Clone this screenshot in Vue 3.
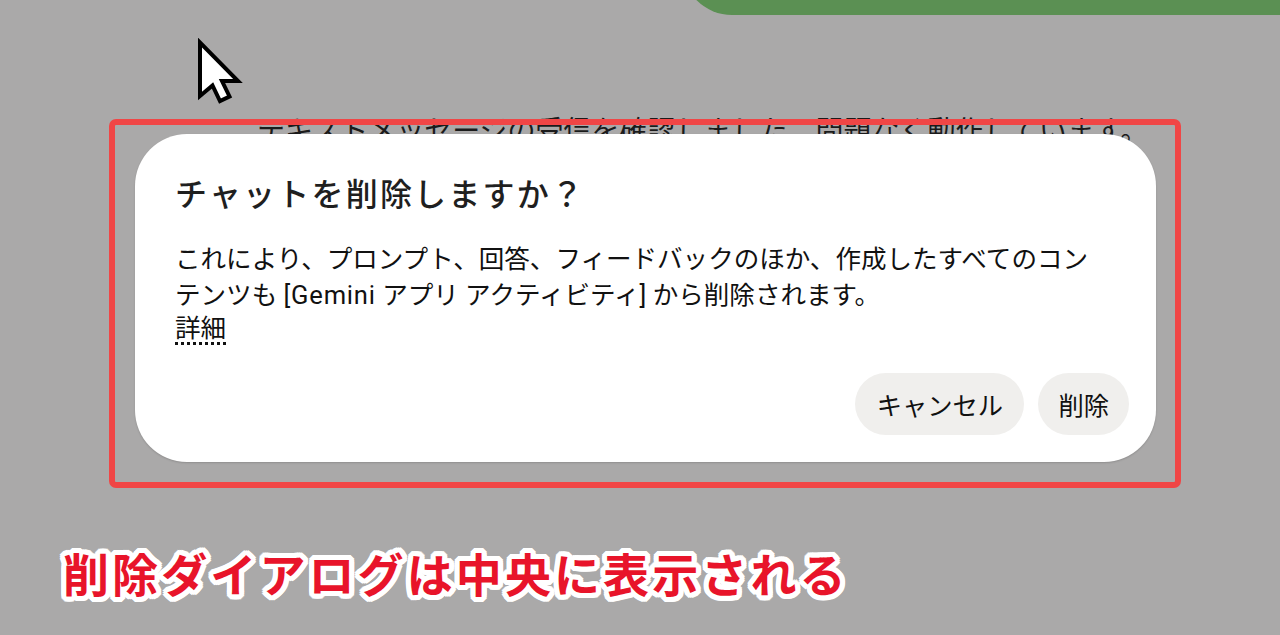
<template>
  <div class="page">
    <div class="top-bar"></div>
    <svg class="cursor" width="50" height="68" viewBox="0 0 50 68">
      <path d="M3 4.500 L3 58 L15.500 47.500 L23 63 L32.500 58.500 L25 43 L41 43 Z" fill="#fff" stroke="#000" stroke-width="4" stroke-linejoin="miter" />
    </svg>
    <p class="behind">テキストメッセージの受信を確認しました。問題なく動作しています。</p>
    <section class="highlight">
      <div class="dialog">
        <h2 class="title">チャットを削除しますか？</h2>
        <div class="body">
          <p>これにより、プロンプト、回答、フィードバックのほか、作成したすべてのコンテンツも <span class="latin">[Gemini</span> アプリ アクティビティ] から削除されます。</p>
          <span class="link">詳細</span>
        </div>
        <div class="actions">
          <button class="btn cancel">キャンセル</button>
          <button class="btn confirm">削除</button>
        </div>
      </div>
    </section>
    <div class="caption">削除ダイアログは中央に表示される</div>
  </div>
</template>

<script setup>
</script>

<style>
html, body { margin: 0; background: #aaa9a9; }
</style>

<style scoped>
.page {
  position: relative;
  width: 1280px;
  height: 635px;
  overflow: hidden;
  background: #aaa9a9;
  font-family: Roboto, "Noto Sans CJK JP", sans-serif;
  display: flex;
  flex-direction: column;
}
.top-bar {
  align-self: flex-end;
  width: 598px;
  height: 50px;
  margin-top: -35px;
  background: #5b9053;
  border-bottom-left-radius: 50px;
  flex: none;
}
.cursor {
  position: absolute;
  left: 197px;
  top: 38px;
}
.behind {
  position: absolute;
  left: 257px;
  top: 112px;
  margin: 0;
  font-size: 28px;
  line-height: 40px;
  white-space: nowrap;
  color: #1b1b1b;
}
.highlight {
  position: relative;
  box-sizing: border-box;
  flex: none;
  width: 1072px;
  height: 369px;
  margin: 104px 0 0 109px;
  padding: 9px 19px 20px 20px;
  border: 6px solid #f04646;
  border-radius: 7px;
}
.dialog {
  box-sizing: border-box;
  height: 328px;
  padding: 38px 27px 27px 40px;
  background: #fff;
  border-radius: 52px;
  box-shadow: 0 1px 2px rgba(0, 0, 0, 0.16);
  display: flex;
  flex-direction: column;
}
.title {
  margin: 0;
  font-size: 32px;
  line-height: 46px;
  font-weight: 500;
  letter-spacing: 2.200px;
  color: #1f1f1f;
}
.body {
  margin-top: 24px;
  width: 930px;
  font-size: 25.550px;
  line-height: 35.500px;
  color: #111;
}
.body p {
  margin: 0;
}
.latin {
  letter-spacing: 0.800px;
}
.link {
  display: block;
  width: fit-content;
  height: 33px;
  margin-top: -1px;
  border-bottom: 3px dotted #111;
  box-sizing: border-box;
  line-height: 32px;
}
.actions {
  margin-top: auto;
  display: flex;
  justify-content: flex-end;
  gap: 14px;
}
.btn {
  height: 62px;
  border: 0;
  border-radius: 31px;
  background: #f0efed;
  color: #111;
  font: inherit;
  font-size: 25.300px;
}
.cancel {
  padding: 0 21.250px;
}
.confirm {
  padding: 0 20px;
}
.caption {
  margin: 58px 0 0 63px;
  font-size: 46px;
  line-height: 60px;
  font-weight: 700;
  color: #e8142a;
  letter-spacing: 3.100px;
  white-space: nowrap;
  text-shadow:
    5px 0 0 #fff, -5px 0 0 #fff, 0 5px 0 #fff, 0 -5px 0 #fff,
    4px 3px 0 #fff, -4px 3px 0 #fff, 4px -3px 0 #fff, -4px -3px 0 #fff,
    3px 4px 0 #fff, -3px 4px 0 #fff, 3px -4px 0 #fff, -3px -4px 0 #fff,
    2px 5px 0 #fff, -2px 5px 0 #fff, 2px -5px 0 #fff, -2px -5px 0 #fff,
    5px 2px 0 #fff, -5px 2px 0 #fff, 5px -2px 0 #fff, -5px -2px 0 #fff,
    3px 0 0 #fff, -3px 0 0 #fff, 0 3px 0 #fff, 0 -3px 0 #fff,
    2px 2px 0 #fff, -2px 2px 0 #fff, 2px -2px 0 #fff, -2px -2px 0 #fff;
}
</style>
